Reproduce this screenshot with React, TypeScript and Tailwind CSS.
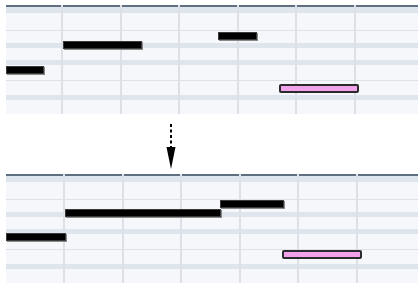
type Note = { x: number; y: number; w: number; pink?: boolean };

// row heights of the piano roll, top to bottom; "g" = darker key band, "l" = thin line
const rows: { h: number; kind: "w" | "g" | "l" }[] = [
  { h: 6, kind: "g" },
  { h: 17, kind: "w" },
  { h: 1, kind: "l" },
  { h: 12, kind: "w" },
  { h: 5, kind: "g" },
  { h: 12, kind: "w" },
  { h: 5, kind: "g" },
  { h: 15, kind: "w" },
  { h: 1, kind: "l" },
  { h: 14, kind: "w" },
  { h: 5, kind: "g" },
  { h: 14, kind: "w" },
];

const before: Note[] = [
  { x: 57, y: 36, w: 79 },
  { x: 212, y: 27, w: 39 },
  { x: 0, y: 61, w: 38 },
  { x: 273, y: 79, w: 80, pink: true },
];

const after: Note[] = [
  { x: 59, y: 35, w: 156 },
  { x: 214, y: 26, w: 64 },
  { x: 0, y: 59, w: 60 },
  { x: 276, y: 76, w: 80, pink: true },
];

function NoteBar({ note }: { note: Note }) {
  if (note.pink) {
    return (
      <div
        className="absolute h-[9px] rounded-[2px] border-2 border-[#2b2b2b] bg-[#f2a2ea]"
        style={{ left: note.x, top: note.y, width: note.w }}
      />
    );
  }
  return (
    <div
      className="absolute h-[8px] border border-[#3a3a3a] bg-black shadow-[1px_1px_0_#8a8a8a]"
      style={{ left: note.x, top: note.y, width: note.w }}
    />
  );
}

function PianoRoll({ notes, firstLine }: { notes: Note[]; firstLine: number }) {
  return (
    <div className="relative ml-[6px] w-[412px] overflow-hidden">
      <div className="h-[2px] bg-[#5f6f82]" />
      <div className="flex flex-col">
        {rows.map((r, i) => (
          <div
            key={i}
            style={{ height: r.h }}
            className={
              r.kind === "g"
                ? "bg-[#dfe5ec]"
                : r.kind === "l"
                  ? "bg-[#dde2e8]"
                  : "bg-[#f5f7fa]"
            }
          />
        ))}
      </div>
      <div
        className="absolute inset-y-0 left-0 flex"
        style={{ paddingLeft: firstLine }}
      >
        {[0, 1, 2, 3, 4, 5].map((i) => (
          <div key={i} className="h-full w-[58.5px] shrink-0 border-l-2 border-[#dde1e6]" />
        ))}
      </div>
      {notes.map((n, i) => (
        <NoteBar key={i} note={n} />
      ))}
    </div>
  );
}

export default function App() {
  return (
    <div className="h-[287px] w-[418px] overflow-hidden bg-white pt-[5px]">
      <PianoRoll notes={before} firstLine={55} />
      <div className="flex h-[60px] pl-[164px]">
        <svg width="14" height="50" viewBox="0 0 14 50" className="mt-[9px]">
          <line
            x1="7"
            y1="1"
            x2="7"
            y2="30"
            stroke="#000"
            strokeWidth="2"
            strokeDasharray="3 2.5"
          />
          <polygon points="2.5,24 11.5,24 7,46" fill="#000" />
        </svg>
      </div>
      <PianoRoll notes={after} firstLine={57} />
    </div>
  );
}
